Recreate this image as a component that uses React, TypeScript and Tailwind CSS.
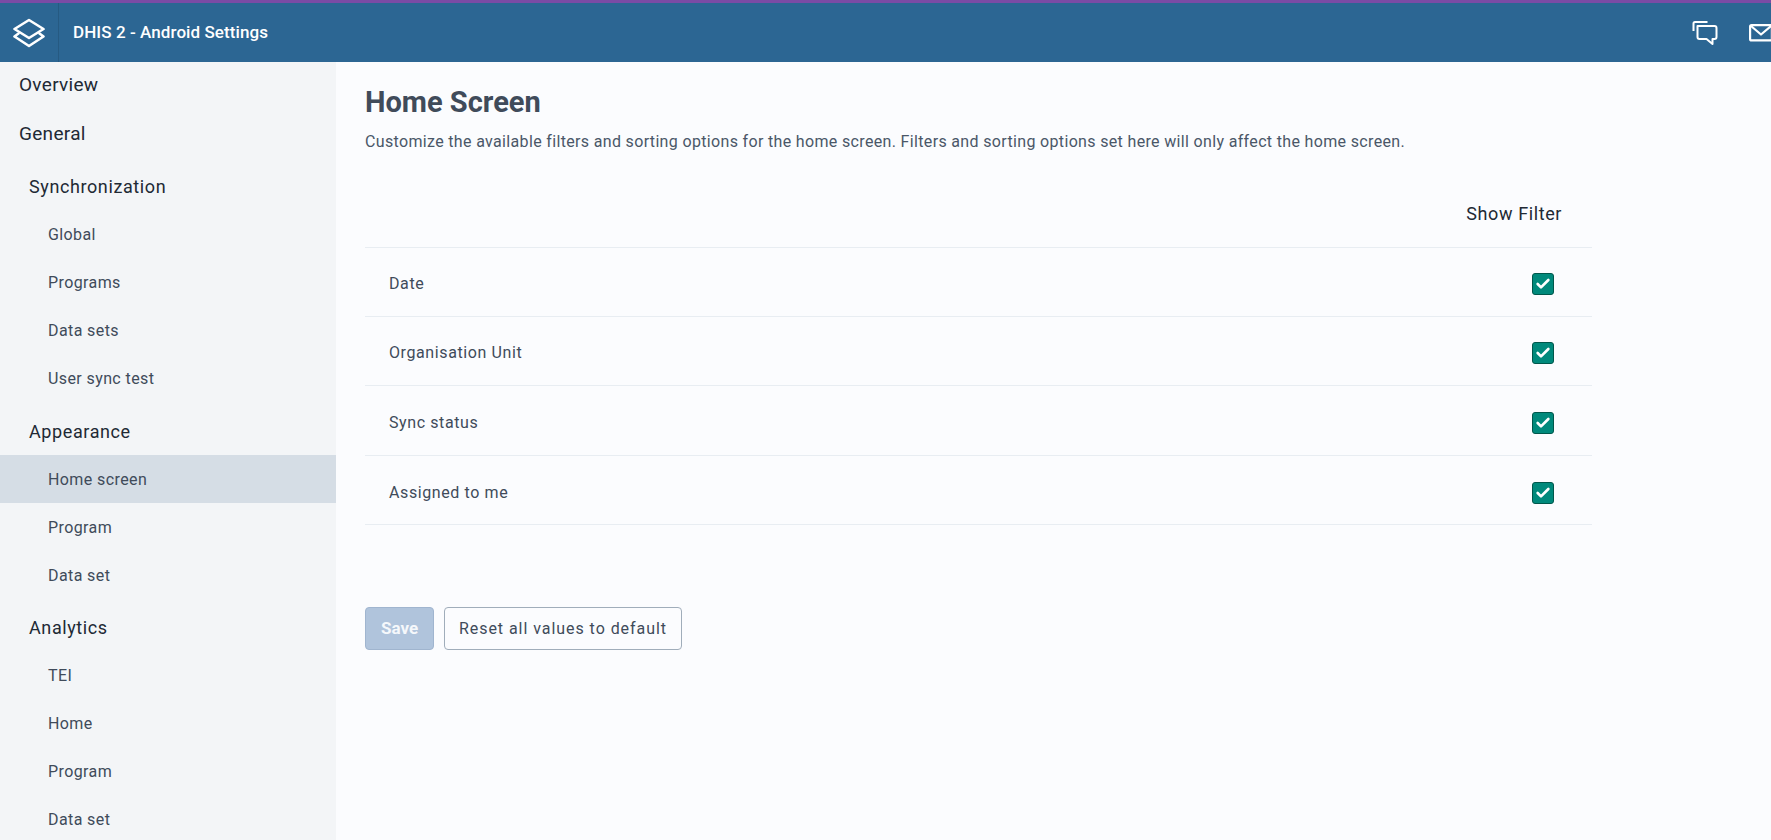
import React from "react";
import { Check } from "lucide-react";

const sections = [
  { title: "Synchronization", items: ["Global", "Programs", "Data sets", "User sync test"], top: "pt-[6px]" },
  { title: "Appearance", items: ["Home screen", "Program", "Data set"], top: "pt-[6px]" },
  { title: "Analytics", items: ["TEI", "Home", "Program", "Data set"], top: "pt-[5px]" },
];

const filters = [
  { label: "Date", row: "h-[69px] pt-[4px]" },
  { label: "Organisation Unit", row: "h-[69px] pt-[4px]" },
  { label: "Sync status", row: "h-[70px] pt-[4px]" },
  { label: "Assigned to me", row: "h-[69px] pt-[6px]" },
];

function Logo() {
  return (
    <svg width="32" height="32" viewBox="0 0 32 32" fill="none" stroke="#ffffff" strokeWidth="2.6" strokeLinejoin="round" strokeLinecap="round">
      <path d="M16 3 L30.5 12 L16 21 L1.5 12 Z" />
      <path d="M5.5 16.5 L1.5 19.5 L16 29 L30.5 19.5 L26.5 16.5" />
    </svg>
  );
}

function ChatIcon() {
  return (
    <svg width="26" height="26" viewBox="0 0 26 26" fill="none" stroke="#ffffff" strokeWidth="2" strokeLinejoin="round">
      <path d="M15.5 2 H3 Q1.5 2 1.5 3.5 V11" />
      <path d="M5.5 6 H22.5 Q24.5 6 24.5 8 V17 Q24.5 19 22.5 19 H20.5 V24 L14.5 19 H7.5 Q5.5 19 5.5 17 Z" />
    </svg>
  );
}

function MailIcon() {
  return (
    <svg width="24" height="18" viewBox="0 0 24 18" fill="none" stroke="#ffffff" strokeWidth="2.2" strokeLinejoin="round">
      <rect x="1.1" y="1.1" width="21.8" height="15.3" rx="1.5" />
      <path d="M2 2 L12 10.5 L22 2" />
    </svg>
  );
}

export default function App() {
  return (
    <div className="flex h-[840px] w-[1771px] flex-col overflow-hidden bg-[#fbfcfe] font-['Roboto',sans-serif]">
      {/* Header */}
      <header className="flex h-[62px] shrink-0 items-stretch overflow-hidden border-t-[3px] border-[#7b4ba5] bg-[#2c6693]">
        <div className="flex w-[59px] shrink-0 items-center justify-center border-r border-[#265a82]">
          <Logo />
        </div>
        <div className="flex-1 self-center pl-[14px] text-[17px] font-medium tracking-[0.08px] text-white">DHIS 2 - Android Settings</div>
        <div className="flex w-[111px] shrink-0 items-center gap-[31px] pl-[32px]">
          <span className="shrink-0"><ChatIcon /></span>
          <span className="shrink-0"><MailIcon /></span>
        </div>
      </header>

      <div className="flex min-h-0 flex-1">
        {/* Sidebar */}
        <nav className="w-[336px] shrink-0 overflow-hidden bg-[#f3f5f7]">
          <div className="flex h-[47px] items-center pl-[19px] text-[19px] tracking-[0.3px] text-[#212934]">Overview</div>
          <div className="flex h-[48px] items-center pt-[2px] pl-[19px] text-[19px] tracking-[0.3px] text-[#212934]">General</div>
          {sections.map((section) => (
            <div key={section.title} className={section.top}>
              <div className="flex h-[47px] items-center pl-[29px] text-[18px] tracking-[0.6px] text-[#212934]">{section.title}</div>
              {section.items.map((item) => (
                <div
                  key={item}
                  className={`flex h-[48px] items-center pt-[2px] pl-[48px] text-[16px] tracking-[0.4px] text-[#404b5a] ${
                    item === "Home screen" ? "bg-[#d5dde5]" : ""
                  }`}
                >
                  {item}
                </div>
              ))}
            </div>
          ))}
        </nav>

        {/* Main content */}
        <main className="flex-1 pl-[29px]">
          <div className="w-[1227px]">
            <h1 className="mt-[21px] text-[29px] leading-[38px] font-bold text-[#404b5a]">Home Screen</h1>
            <p className="mt-[10px] text-[16px] leading-[22px] tracking-[0.34px] text-[#4a5768]">
              Customize the available filters and sorting options for the home screen. Filters and sorting options set here will only affect the home screen.
            </p>

            <div className="mt-[26px] flex h-[69px] items-center justify-end border-b border-[#e8edf2] pr-[30px] text-[18px] tracking-[0.6px] text-[#212934]">
              Show Filter
            </div>
            {filters.map((filter) => (
              <div key={filter.label} className={`flex items-center justify-between border-b border-[#e8edf2] pr-[38px] pl-[24px] text-[16px] tracking-[0.6px] text-[#404b5a] ${filter.row}`}>
                <span>{filter.label}</span>
                <span className="flex h-[22px] w-[22px] items-center justify-center rounded-[3px] border border-[#00574b] bg-[#00897b]">
                  <Check size={16} strokeWidth={4} color="#ffffff" />
                </span>
              </div>
            ))}

            <div className="mt-[82px] flex gap-[10px]">
              <button className="h-[43px] w-[69px] rounded-[4px] border border-[#a0b5cf] bg-[#b0c4dc] text-[17px] font-bold text-[#f5f8fb]">
                Save
              </button>
              <button className="h-[43px] w-[238px] rounded-[4px] border border-[#a0adba] bg-[#fbfcfe] text-[16px] tracking-[0.95px] text-[#404b5a]">
                Reset all values to default
              </button>
            </div>
          </div>
        </main>
      </div>
    </div>
  );
}
